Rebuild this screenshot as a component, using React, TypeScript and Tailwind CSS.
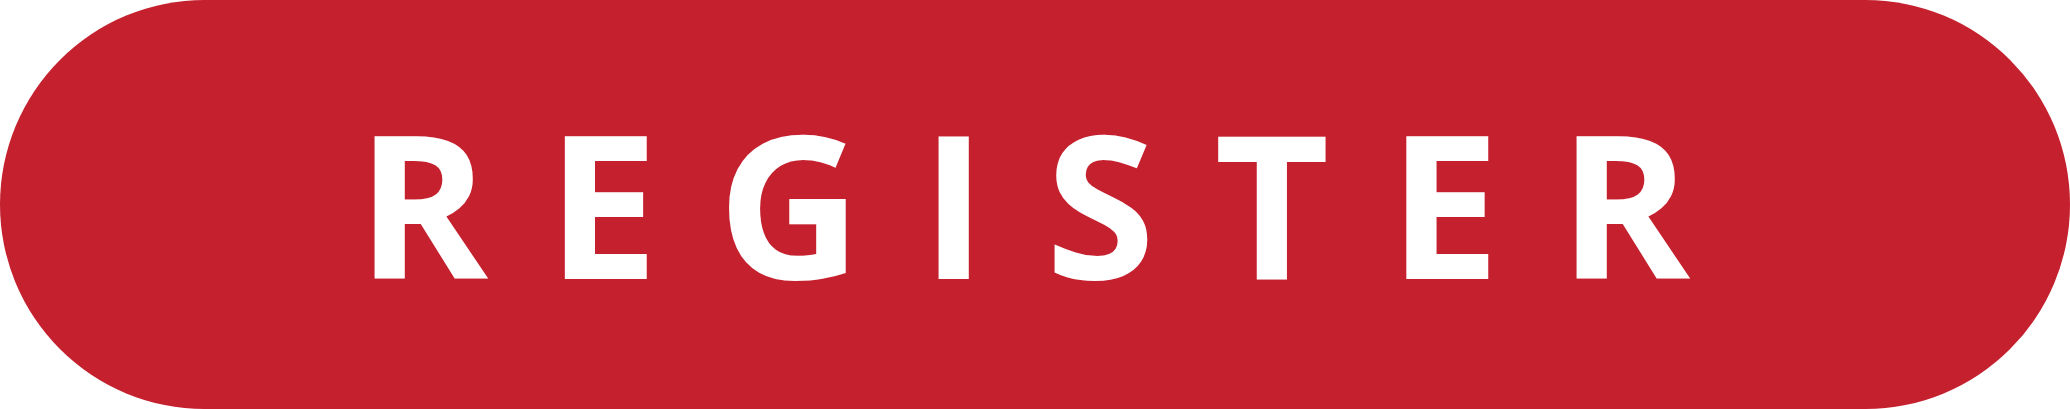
export default function App() {
  return (
    <button
      type="button"
      className="flex h-[409px] w-[2070px] items-center justify-center rounded-full bg-[#c5202e]"
    >
      <span className="mb-[7px] pl-[36px] font-['Open_Sans',sans-serif] text-[199px] leading-none font-bold font-stretch-[90%] tracking-[59px] text-white">
        REGISTER
      </span>
    </button>
  );
}
